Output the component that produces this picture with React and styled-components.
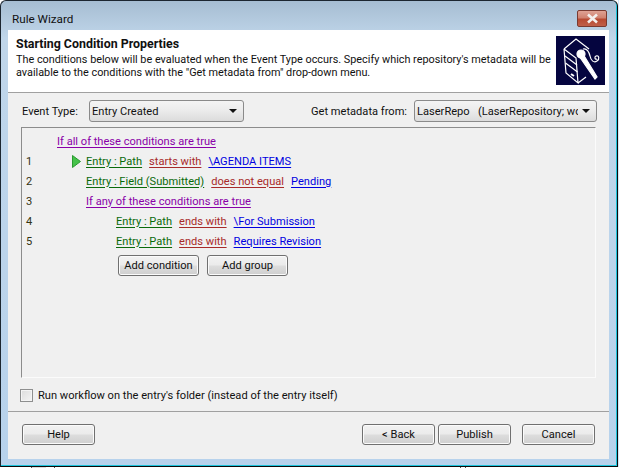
import React from 'react';
import styled, { createGlobalStyle } from 'styled-components';

const GlobalStyle = createGlobalStyle`
  html, body {
    margin: 0;
    padding: 0;
    background: #ffffff;
  }
  body {
    font-family: Roboto, "Liberation Sans", sans-serif;
    font-size: 11.1px;
    color: #111111;
    overflow: hidden;
  }
`;

const Screen = styled.div`
  width: 619px;
  height: 468px;
  overflow: hidden;
  background: linear-gradient(90deg, #ffffff 0, #ffffff 618px, #d4e6f8 618px);
`;

const Frame = styled.div`
  box-sizing: border-box;
  width: 618px;
  height: 467px;
  border: 1px solid #1c2630;
  border-bottom-color: #0a0a0a;
  border-right-color: #0a0a0a;
  border-radius: 6px 6px 0 0;
  background: linear-gradient(180deg, #a6bdd2 0%, #c0d6ea 8%, #b7d2ec 100%);
  box-shadow: inset -1px -1px 0 #1cc4dc;
  padding: 0 8px 7px 7px;
  display: flex;
  flex-direction: column;
`;

const BottomStrip = styled.div`
  height: 1px;
  background: linear-gradient(
    90deg,
    #ffffff 31px,
    #555555 31px,
    #555555 32px,
    #dddddd 32px,
    #dddddd 46px,
    #ffffff 46px,
    #ffffff 54px,
    #555555 54px,
    #555555 55px,
    #ffffff 55px,
    #ffffff 460px,
    #555555 460px,
    #555555 461px,
    #ffffff 461px,
    #ffffff 465px,
    #555555 465px,
    #555555 466px,
    #ffffff 466px
  );
`;

const TitleBar = styled.div`
  height: 29px;
  flex: none;
  display: flex;
  align-items: flex-start;
  justify-content: space-between;
`;

const TitleText = styled.div`
  font-size: 11.7px;
  line-height: 16px;
  margin: 10px 0 0 4px;
  color: #111111;
`;

const CloseButton = styled.div`
  box-sizing: border-box;
  width: 30px;
  height: 17px;
  margin: 9px 2px 0 0;
  border: 1px solid #7a3a30;
  border-radius: 2px;
  background: linear-gradient(180deg, #dfa294 0%, #d08270 45%, #b84a32 55%, #c0604a 100%);
  display: flex;
  align-items: center;
  justify-content: center;
`;

const Client = styled.div`
  flex: 1;
  background: #f0f0f0;
  display: flex;
  flex-direction: column;
`;

const Header = styled.div`
  box-sizing: border-box;
  height: 63px;
  flex: none;
  background: #ffffff;
  border-bottom: 1px solid #a0a0a0;
  padding: 6px 4px 0 8px;
  display: flex;
  justify-content: space-between;
`;

const HeaderCopy = styled.div`
  font-size: 10.85px;
  line-height: 13px;
  white-space: nowrap;
  padding-top: 1px;
`;

const HeaderTitle = styled.div`
  font-size: 12.4px;
  font-weight: 700;
  line-height: 14px;
  margin-bottom: 2px;
`;

const LogoBox = styled.div`
  width: 49px;
  height: 49px;
  flex: none;
  background: #05053f;
`;

const FormRow = styled.div`
  display: flex;
  align-items: center;
  justify-content: space-between;
  padding: 7px 12px 0 14px;
  height: 22px;
`;

const FieldGroup = styled.div`
  display: flex;
  align-items: center;
`;

const FieldLabel = styled.span`
  width: ${(p) => p.$width}px;
  flex: none;
  white-space: nowrap;
`;

const SelectBox = styled.div`
  box-sizing: border-box;
  width: ${(p) => p.$width}px;
  height: 22px;
  border: 1px solid #8a8a8a;
  border-radius: 3px;
  background: linear-gradient(180deg, #f4f4f4 0%, #ebebeb 50%, #dcdcdc 100%);
  padding: 0 6px 0 2px;
  display: flex;
  align-items: center;
  justify-content: space-between;
  gap: 4px;
`;

const SelectValue = styled.span`
  overflow: hidden;
  white-space: pre;
  flex: 1;
`;

const Caret = styled.span`
  width: 0;
  height: 0;
  flex: none;
  border-left: 4px solid transparent;
  border-right: 4px solid transparent;
  border-top: 4px solid #111111;
`;

const RulePanel = styled.div`
  box-sizing: border-box;
  height: 251px;
  margin: 5px 13px 0 13px;
  border: 1px solid #fbfbfb;
  border-top: 1px solid #8c8c8c;
  border-left: 1px solid #8c8c8c;
  padding: 3px 0 0 0;
`;

const RuleRow = styled.div`
  display: flex;
  align-items: center;
  height: 20px;
`;

const LineNumber = styled.span`
  width: 6px;
  margin-left: 4px;
  flex: none;
  color: #333311;
`;

const RuleBody = styled.div`
  display: flex;
  align-items: center;
  gap: 7px;
  margin-left: ${(p) => p.$indent}px;
`;

const PlayIcon = styled.svg`
  width: 9px;
  height: 13px;
  margin-right: -2px;
`;

const Token = styled.span`
  color: ${(p) => p.$color};
  text-decoration: underline;
  text-underline-offset: 2px;
  white-space: nowrap;
`;

const ButtonRow = styled.div`
  display: flex;
  gap: 8px;
  margin: 4px 0 0 96px;
`;

const PushButton = styled.div`
  box-sizing: border-box;
  width: ${(p) => p.$width}px;
  height: 21px;
  border: 1px solid #707070;
  border-radius: 3px;
  background: linear-gradient(180deg, #f2f2f2 0%, #ebebeb 48%, #dddddd 52%, #cfcfcf 100%);
  box-shadow: inset 0 0 0 1px #fbfbfb;
  display: flex;
  align-items: center;
  justify-content: center;
`;

const CheckRow = styled.div`
  display: flex;
  align-items: center;
  gap: 5px;
  margin: 10px 0 0 12px;
  height: 14px;
`;

const CheckBox = styled.span`
  box-sizing: border-box;
  width: 13px;
  height: 13px;
  border: 1px solid #8e8f8f;
  background: linear-gradient(135deg, #dcdcdc 0%, #f4f4f4 100%);
  box-shadow: inset 0 0 0 1px #f4f4f4;
`;

const Divider = styled.div`
  height: 1px;
  background: #a0a0a0;
  margin-top: 9px;
`;

const Footer = styled.div`
  display: flex;
  justify-content: space-between;
  padding: 12px 14px 0 14px;
`;

const FooterGroup = styled.div`
  display: flex;
  gap: ${(p) => p.$gap}px;
`;

const rows = [
  { n: '1', indent: 40, play: true, parts: ['Entry : Path', 'starts with', '\\AGENDA ITEMS'] },
  { n: '2', indent: 54, parts: ['Entry : Field (Submitted)', 'does not equal', 'Pending'] },
  { n: '3', indent: 54, group: 'If any of these conditions are true' },
  { n: '4', indent: 84, parts: ['Entry : Path', 'ends with', '\\For Submission'] },
  { n: '5', indent: 84, parts: ['Entry : Path', 'ends with', 'Requires Revision'] },
];

const GREEN = '#0a6a0a';
const RED = '#a82a2a';
const BLUE = '#0000e0';
const PURPLE = '#8a00a8';

const RepoLogo = () => (
  <svg width="49" height="49" viewBox="0 0 49 49" fill="none" stroke="#ffffff" strokeWidth="1.2">
    <path d="M8 13 L20 3 L33 13 M8 13 L20 22 L22 47 L10 37 L8 13 M22 47 L30 41" />
    <path d="M9 20 L21 29 M9.5 27 L21.5 36" />
    <path d="M15 38 L18 40" strokeWidth="2" />
    <circle cx="25" cy="18" r="4" fill="#ffffff" />
    <path d="M23 20 L39 43 L41 41 L27 18 Z" fill="#ffffff" />
    <path d="M27 13 C31 12 33 16 34 20 C35 25 38 27 41 25 C44 23 43 19 40 20 C38 21 39 24 41 23" />
  </svg>
);

export default function App() {
  return (
    <Screen>
      <GlobalStyle />
      <Frame>
        <TitleBar>
          <TitleText>Rule Wizard</TitleText>
          <CloseButton>
            <svg width="13" height="11" viewBox="0 0 13 11">
              <path d="M2 1.5 L11 9.5 M11 1.5 L2 9.5" stroke="#f4f0ee" strokeWidth="2.6" />
            </svg>
          </CloseButton>
        </TitleBar>
        <Client>
          <Header>
            <HeaderCopy>
              <HeaderTitle>Starting Condition Properties</HeaderTitle>
              The conditions below will be evaluated when the Event Type occurs. Specify which repository's metadata will be
              <br />
              available to the conditions with the "Get metadata from" drop-down menu.
            </HeaderCopy>
            <LogoBox>
              <RepoLogo />
            </LogoBox>
          </Header>
          <FormRow>
            <FieldGroup>
              <FieldLabel $width={67}>Event Type:</FieldLabel>
              <SelectBox $width={155}>
                <SelectValue>Entry Created</SelectValue>
                <Caret />
              </SelectBox>
            </FieldGroup>
            <FieldGroup>
              <FieldLabel $width={103}>Get metadata from:</FieldLabel>
              <SelectBox $width={183}>
                <SelectValue>LaserRepo   (LaserRepository; workflow)</SelectValue>
                <Caret />
              </SelectBox>
            </FieldGroup>
          </FormRow>
          <RulePanel>
            <RuleRow>
              <RuleBody $indent={35}>
                <Token $color={PURPLE}>If all of these conditions are true</Token>
              </RuleBody>
            </RuleRow>
            {rows.map((row) => (
              <RuleRow key={row.n}>
                <LineNumber>{row.n}</LineNumber>
                <RuleBody $indent={row.indent}>
                  {row.play && (
                    <PlayIcon viewBox="0 0 9 13">
                      <path d="M0.5 0.5 L8.5 6.5 L0.5 12.5 Z" fill="#45c24a" stroke="#2a9a30" />
                    </PlayIcon>
                  )}
                  {row.group && <Token $color={PURPLE}>{row.group}</Token>}
                  {row.parts && (
                    <>
                      <Token $color={GREEN}>{row.parts[0]}</Token>
                      <Token $color={RED}>{row.parts[1]}</Token>
                      <Token $color={BLUE}>{row.parts[2]}</Token>
                    </>
                  )}
                </RuleBody>
              </RuleRow>
            ))}
            <ButtonRow>
              <PushButton $width={81}>Add condition</PushButton>
              <PushButton $width={81}>Add group</PushButton>
            </ButtonRow>
          </RulePanel>
          <CheckRow>
            <CheckBox />
            <span>Run workflow on the entry's folder (instead of the entry itself)</span>
          </CheckRow>
          <Divider />
          <Footer>
            <PushButton $width={73}>Help</PushButton>
            <FooterGroup $gap={11}>
              <FooterGroup $gap={3}>
                <PushButton $width={73}>&lt; Back</PushButton>
                <PushButton $width={73}>Publish</PushButton>
              </FooterGroup>
              <PushButton $width={73}>Cancel</PushButton>
            </FooterGroup>
          </Footer>
        </Client>
      </Frame>
      <BottomStrip />
    </Screen>
  );
}
